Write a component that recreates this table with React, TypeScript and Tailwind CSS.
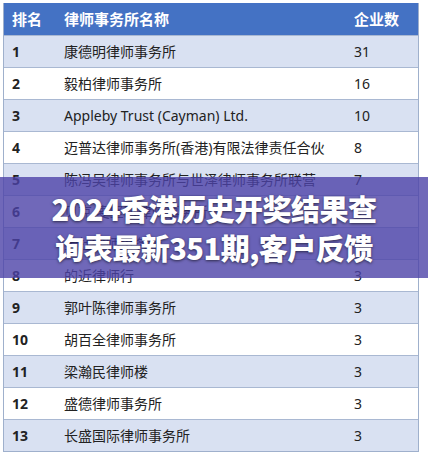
import React from "react";

interface Firm {
  rank: string;
  name: string;
  count: string;
}

const firms: Firm[] = [
  { rank: "1", name: "康德明律师事务所", count: "31" },
  { rank: "2", name: "毅柏律师事务所", count: "16" },
  { rank: "3", name: "Appleby Trust (Cayman) Ltd.", count: "10" },
  { rank: "4", name: "迈普达律师事务所(香港)有限法律责任合伙", count: "8" },
  { rank: "5", name: "陈冯吴律师事务所与世泽律师事务所联营", count: "7" },
  { rank: "6", name: "贝克·麦坚时律师事务所", count: "4" },
  { rank: "7", name: "金杜律师事务所", count: "4" },
  { rank: "8", name: "的近律师行", count: "3" },
  { rank: "9", name: "郭叶陈律师事务所", count: "3" },
  { rank: "10", name: "胡百全律师事务所", count: "3" },
  { rank: "11", name: "梁瀚民律师楼", count: "3" },
  { rank: "12", name: "盛德律师事务所", count: "3" },
  { rank: "13", name: "长盛国际律师事务所", count: "3" },
];

const font = {
  fontFamily: '"Noto Sans", "Noto Sans CJK SC", sans-serif',
};

const bannerFont = {
  fontFamily: '"Noto Sans CJK SC", "Noto Sans", sans-serif',
};

const App = () => {
  return (
    <div className="w-[428px] h-[455px] bg-white relative overflow-hidden" style={font}>
      <div className="pt-[3px] pl-[3px] w-[419px]">
        <div className="border-l border-r border-b border-[#9fb0cc]">
          <div className="flex items-center h-[32px] bg-[#4472c4] text-white font-bold text-[15px]">
            <div className="w-[52px] pl-[8px]">排名</div>
            <div className="flex-1 pl-[8px]">律师事务所名称</div>
            <div className="w-[66px] pl-[2px]">企业数</div>
          </div>
          {firms.map((f, idx) => (
            <div
              key={idx}
              className={
                "flex items-center h-[32px] border-t border-[#a9b8d2] text-[14px] text-[#222] " +
                (idx % 2 === 0 ? "bg-[#d9e1f2]" : "bg-white")
              }
            >
              <div className="w-[52px] pl-[8px] font-bold">{f.rank}</div>
              <div className="flex-1 pl-[8px] whitespace-nowrap">{f.name}</div>
              <div className="w-[66px] pl-[2px]">{f.count}</div>
            </div>
          ))}
        </div>
      </div>

      {/* title banner over the table */}
      <div className="absolute left-0 right-0 top-[177px] h-[101px] bg-[#4c42a8]/80 flex flex-col items-center justify-center">
        <div
          className="text-white font-black text-[29px] leading-[39px] tracking-[-0.5px] [text-shadow:0_1px_3px_rgba(0,0,0,0.6)]"
          style={bannerFont}
        >
          2024香港历史开奖结果查
        </div>
        <div
          className="text-white font-black text-[29px] leading-[39px] tracking-[-0.5px] [text-shadow:0_1px_3px_rgba(0,0,0,0.6)]"
          style={bannerFont}
        >
          询表最新351期,客户反馈
        </div>
      </div>
    </div>
  );
};

export default App;
